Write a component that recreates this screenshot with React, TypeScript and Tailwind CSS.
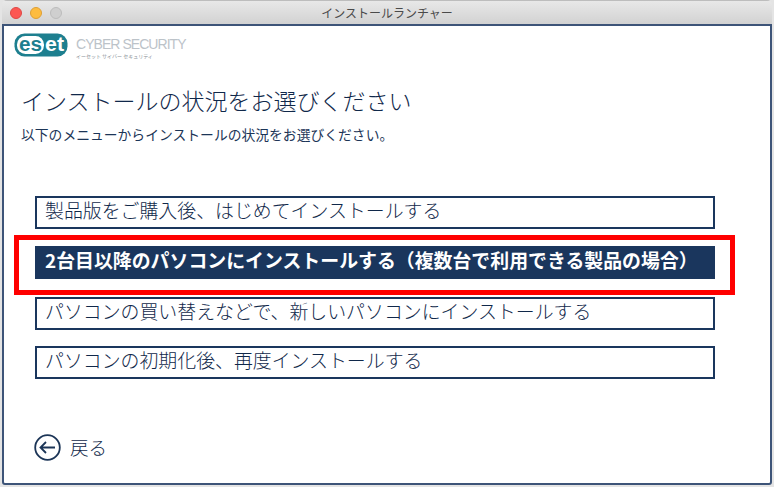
const jp = "font-['Noto_Sans_CJK_JP','Noto_Sans_CJK_SC',sans-serif]";

const options = [
  { label: "製品版をご購入後、はじめてインストールする" },
  { label: "2台目以降のパソコンにインストールする（複数台で利用できる製品の場合）", active: true },
  { label: "パソコンの買い替えなどで、新しいパソコンにインストールする" },
  { label: "パソコンの初期化後、再度インストールする" },
];

function EsetLogo() {
  return (
    <svg width="54" height="24" viewBox="0 0 54 24" className="block">
      <rect x="0.5" y="0.5" width="53" height="23" rx="10" fill="#1d7f8f" />
      <rect x="3" y="3" width="27" height="18" rx="8.5" fill="#fff" />
      <text x="5" y="17.5" fontFamily="Liberation Sans" fontWeight="700" fontSize="20" fill="#1d7f8f" textLength="23" lengthAdjust="spacingAndGlyphs">es</text>
      <text x="31" y="17.5" fontFamily="Liberation Sans" fontWeight="700" fontSize="20" fill="#fff" textLength="19" lengthAdjust="spacingAndGlyphs">et</text>
    </svg>
  );
}

export default function App() {
  return (
    <div className={`w-[774px] h-[487px] bg-[#e4e4e4] pl-[2px] pr-[2px] overflow-hidden ${jp}`}>
      <div className="flex h-[485px] flex-col rounded-t-[5px] overflow-hidden">
        {/* title bar */}
        <div className="relative flex h-[24px] shrink-0 items-center justify-center bg-gradient-to-b from-[#e8e8e8] to-[#d2d2d2] border-t border-[#bdbdbd]">
          <div className="absolute left-[8px] top-[6px] flex gap-[8px]">
            <span className="h-[12px] w-[12px] rounded-full bg-[#fc5753] border border-[#df4744]" />
            <span className="h-[12px] w-[12px] rounded-full bg-[#fdbc40] border border-[#de9f34]" />
            <span className="h-[12px] w-[12px] rounded-full bg-[#cfcfcf] border border-[#bcbcbc]" />
          </div>
          <span className="text-[12px] leading-none text-[#4a4a4a]">インストールランチャー</span>
        </div>

        {/* window body */}
        <div className="flex flex-1 flex-col border-2 border-[#3d5478] rounded-b-[3px] bg-white pl-[17px] pr-[2px]">
          <div className="flex items-start gap-[8px] pt-[7px] -ml-[7px]">
            <EsetLogo />
            <div className="flex flex-col mt-[2px]">
              <span className="font-['Liberation_Sans',sans-serif] text-[14px] leading-[19px] tracking-[-0.95px] text-[#bcc3c9]">CYBER SECURITY</span>
              <span className="text-[5px] leading-[6px] text-[#8a9299] -mt-[1px]">イーセット サイバー セキュリティ</span>
            </div>
          </div>

          <h1 className="mt-[26px] text-[23px] font-light leading-[30px] text-[#10284a]">インストールの状況をお選びください</h1>
          <p className="mt-[10px] text-[13.8px] leading-[18px] text-[#1c3557]">以下のメニューからインストールの状況をお選びください。</p>

          <div className="relative mt-[53px] ml-[14px] flex w-[680px] flex-col">
            {options.map((o, i) => (
              <button
                key={i}
                className={`flex h-[33px] w-full items-center border-2 border-[#1a365d] pb-[4px] pl-[8px] text-left text-[18.9px] leading-none ${
                  o.active ? "bg-[#1a365d] font-bold text-white" : "bg-white font-light text-[#10284a]"
                } ${i === 0 ? "" : i === 1 ? "mt-[17px]" : i === 2 ? "mt-[18px]" : "mt-[16px]"}`}
              >
                {o.label}
              </button>
            ))}
            <div className="pointer-events-none absolute left-[-21px] top-[39px] h-[60px] w-[721px] border-[5px] border-[#ff0000]" />
          </div>

          <div className="mt-[55px] flex items-center gap-[9px] ml-[13px]">
            <svg width="27" height="27" viewBox="0 0 27 27" fill="none" stroke="#1c3557" strokeWidth="1.8">
              <circle cx="13.5" cy="13.5" r="12.3" />
              <path d="M21 13.5H6.5M12 8l-5.5 5.5L12 19" />
            </svg>
            <span className="text-[18.5px] font-light leading-none text-[#10284a]">戻る</span>
          </div>
        </div>
      </div>
    </div>
  );
}
